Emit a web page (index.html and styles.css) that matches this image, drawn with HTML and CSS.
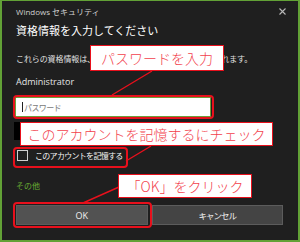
FILE: index.html
```html
<!DOCTYPE html>
<html lang="ja">
  <head>
    <meta charset="utf-8" />
    <title>Windows セキュリティ</title>
    <link rel="stylesheet" href="styles.css">
  </head>
  <body>
    <div class="screen">
      <div class="dialog">
        <div class="titlebar">
          <span class="app">Windows セキュリティ</span>
          <svg class="close" width="7" height="7" viewBox="0 0 7 7"><path d="M0.5 0.5L6.5 6.5M6.5 0.5L0.5 6.5" stroke="#b8b8b8" stroke-width="1.1"/></svg>
        </div>
        <h1 class="heading">資格情報を入力してください</h1>
        <p class="desc">これらの資格情報は、リモートサーバーへの接続に使用されます。</p>
        <div class="user">Administrator</div>
        <div class="field"><span class="caret"></span><span class="placeholder">パスワード</span></div>
        <div class="blackbar"></div>
        <label class="remember"><span class="box"></span>このアカウントを記憶する</label>
        <a class="more">その他</a>
        <div class="buttons">
          <button class="btn ok">OK</button>
          <button class="btn cancel">キャンセル</button>
        </div>
      </div>

      <!-- annotations drawn over the dialog -->
      <div class="mark mark-pw"></div>
      <div class="mark mark-remember"></div>
      <div class="mark mark-ok"></div>
      <svg class="leaders" width="300" height="242" viewBox="0 0 300 242">
        <path d="M152 71L112 95M151 146L126 161M119 187L83 203" stroke="#e8101c" stroke-width="1.4" fill="none"/>
      </svg>
      <div class="callout callout-pw">パスワードを入力</div>
      <div class="callout callout-remember">このアカウントを記憶するにチェック</div>
      <div class="callout callout-ok">「OK」をクリック</div>
    </div>
  </body>
</html>
```

FILE: styles.css
```css
body {
  margin: 0;
  background: #1f1f1f;
  font-family: "Open Sans", "Noto Sans CJK JP", sans-serif;
}
.screen {
  position: relative;
  width: 300px;
  height: 242px;
  overflow: hidden;
}
.dialog {
  box-sizing: border-box;
  width: 300px;
  height: 242px;
  background: #1f1f1f;
  border: 2px solid #62a136;
  border-top-width: 1px;
  padding: 0 15px 0 14px;
  color: #e6e6e6;
}
.titlebar {
  display: flex;
  align-items: center;
  justify-content: space-between;
  height: 20px;
  font-size: 8px;
  color: #cfcfcf;
}
.close {
  margin-right: -3px;
}
.heading {
  margin: 3px 0 0;
  font-size: 11px;
  line-height: 14px;
  font-weight: normal;
  color: #ffffff;
  white-space: nowrap;
}
.desc {
  margin: 15px 0 0;
  font-size: 8px;
  line-height: 12px;
  letter-spacing: -0.1px;
  white-space: nowrap;
  overflow: hidden;
  color: #e0e0e0;
}
.user {
  margin-top: 11px;
  font-size: 9px;
  line-height: 12px;
  color: #e6e6e6;
}
.field {
  box-sizing: border-box;
  display: flex;
  align-items: center;
  margin: 9px 0 0 -1px;
  width: 196px;
  height: 20px;
  background: #ffffff;
  border: 1px solid #6a9f3b;
  padding-left: 6px;
}
.caret {
  width: 1px;
  height: 10px;
  background: #222;
  margin-right: 1px;
}
.placeholder {
  font-size: 8px;
  letter-spacing: -0.6px;
  color: #7a7a7a;
}
.blackbar {
  margin: 5px 0 0 -2px;
  width: 70px;
  height: 18px;
  background: #000;
}
.remember {
  display: flex;
  align-items: center;
  margin-top: 9px;
  height: 12px;
  font-size: 8px;
  letter-spacing: -0.7px;
  color: #f4f4f4;
}
.box {
  box-sizing: border-box;
  width: 11px;
  height: 11px;
  margin: 0 7px 0 1px;
  border: 1px solid #cfcfcf;
}
.more {
  display: block;
  margin-top: 19px;
  font-size: 8px;
  line-height: 12px;
  color: #68ac32;
}
.buttons {
  display: flex;
  gap: 4px;
  margin-top: 13px;
}
.btn {
  box-sizing: border-box;
  flex: 1;
  height: 20px;
  border: 1px solid #5c5c5c;
  font-family: inherit;
  font-size: 9px;
  color: #f0f0f0;
  padding: 0;
}
.ok {
  background: #525252;
}
.cancel {
  background: #444444;
  font-size: 8.5px;
  letter-spacing: -1px;
}
.mark {
  position: absolute;
  box-sizing: border-box;
  border: 2px solid #e8101c;
  border-radius: 4px;
}
.mark-pw {
  left: 13px;
  top: 95px;
  width: 201px;
  height: 24px;
}
.mark-remember {
  left: 13px;
  top: 147px;
  width: 115px;
  height: 21px;
}
.mark-ok {
  left: 13px;
  top: 202px;
  width: 139px;
  height: 26px;
}
.leaders {
  position: absolute;
  left: 0;
  top: 0;
}
.callout {
  position: absolute;
  box-sizing: border-box;
  display: flex;
  align-items: center;
  justify-content: center;
  background: #ffffff;
  border: 1.5px solid #e8101c;
  font-family: "Noto Sans CJK JP", sans-serif;
  font-size: 14px;
  font-weight: 300;
  color: #f2414c;
  white-space: nowrap;
}
.callout-pw {
  left: 90px;
  top: 45px;
  width: 134px;
  height: 26px;
}
.callout-remember {
  left: 20px;
  top: 122px;
  width: 253px;
  height: 24px;
}
.callout-ok {
  left: 118px;
  top: 174px;
  width: 134px;
  height: 24px;
}
```
